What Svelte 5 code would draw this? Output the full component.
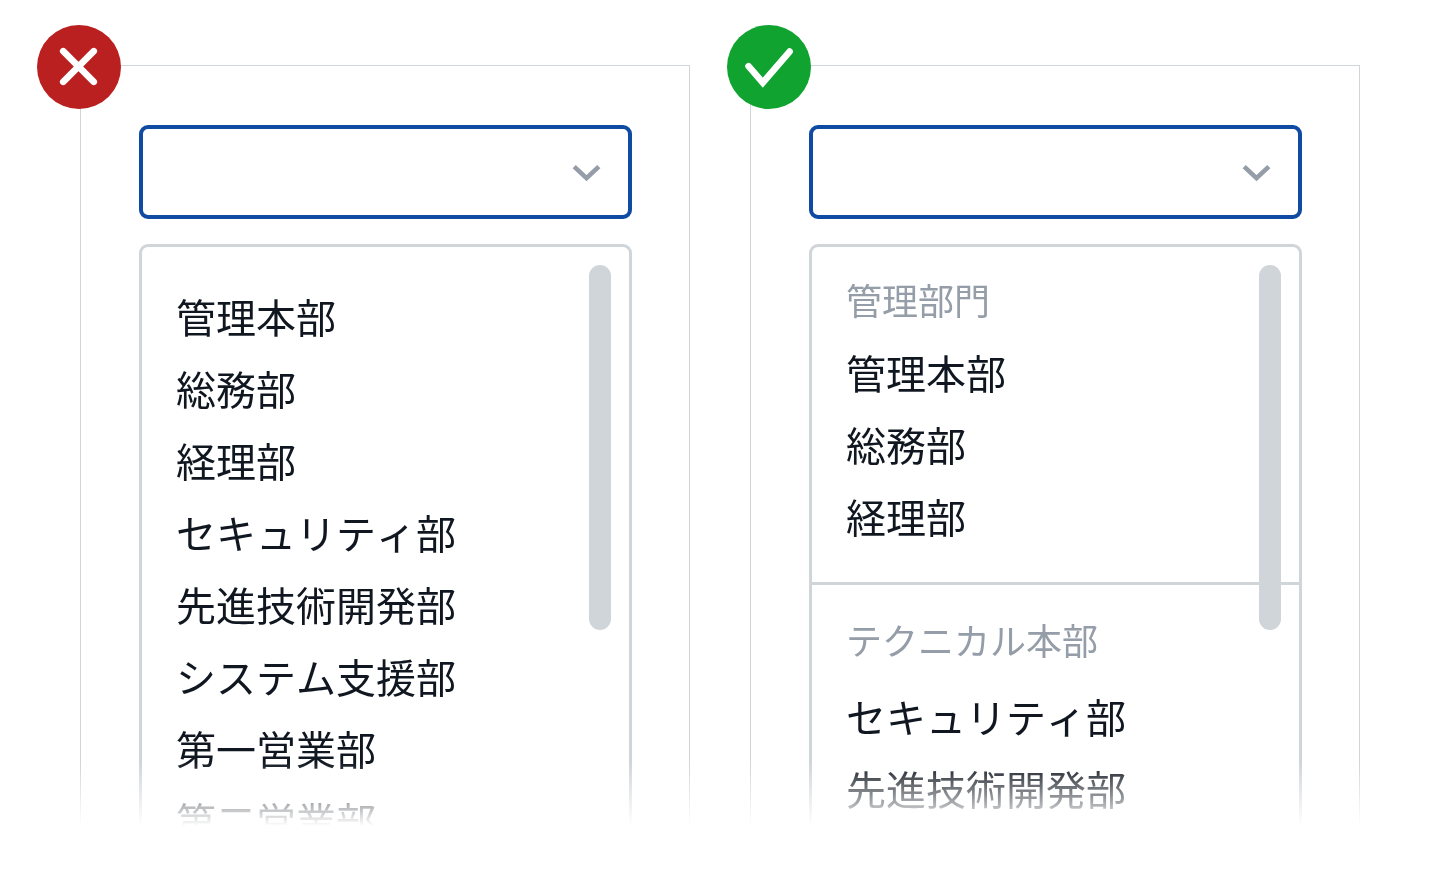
<script>
  const examples = [
    {
      id: 'flat',
      ok: false,
      groups: [
        {
          title: '',
          items: ['管理本部', '総務部', '経理部', 'セキュリティ部', '先進技術開発部', 'システム支援部', '第一営業部', '第二営業部'],
        },
      ],
    },
    {
      id: 'grouped',
      ok: true,
      groups: [
        { title: '管理部門', items: ['管理本部', '総務部', '経理部'] },
        { title: 'テクニカル本部', items: ['セキュリティ部', '先進技術開発部'] },
      ],
    },
  ];
</script>

<main>
  {#each examples as ex (ex.id)}
    <section class="example">
      <div class="frame">
        <div class="field">
          <select id={ex.id} aria-label="部署">
            <option value="" hidden></option>
            {#each ex.groups as g}
              {#each g.items as item}
                <option>{item}</option>
              {/each}
            {/each}
          </select>
          <svg class="chevron" viewBox="0 0 32 32" aria-hidden="true">
            <path d="M4.2 10.6 16.5 22.2 28.8 10.6" />
          </svg>
        </div>
        <div class="menu" role="listbox" aria-label="部署">
          {#each ex.groups as g}
            <div class="group" class:titled={g.title} role="group">
              {#if g.title}
                <div class="title">{g.title}</div>
              {/if}
              {#each g.items as item}
                <div class="option" role="option" aria-selected="false" tabindex="-1">{item}</div>
              {/each}
            </div>
          {/each}
          <span class="thumb"></span>
        </div>
      </div>
      <svg class="badge" class:ok={ex.ok} viewBox="0 0 84 84" aria-hidden="true">
        <circle cx="42" cy="42" r="42" />
        {#if ex.ok}
          <path d="M21.5 41.2 35.8 57.7 62.6 26.6" />
        {:else}
          <path d="M26.2 26.2 56.8 56.8M56.8 26.2 26.2 56.8" />
        {/if}
      </svg>
    </section>
  {/each}
</main>

<style>
  :global(body) {
    margin: 0;
    background: #fff;
  }

  main {
    display: grid;
    grid-template-columns: 1fr 1fr;
    gap: 60px;
    padding: 65px 80px 54px;
    color: #101720;
    font-family: 'Noto Sans CJK JP', 'Noto Sans', sans-serif;
    font-size: 40px;
    font-kerning: none;
    line-height: 72px;
  }

  .example {
    position: relative;
    min-width: 0;
  }

  .frame {
    display: flex;
    flex-direction: column;
    gap: 25px;
    padding: 59px 57px 0 58px;
    border: 1px solid #d0d5da;
    border-bottom: 0;
    mask-image: linear-gradient(#000 calc(100% - 64px), transparent);
  }

  .field {
    position: relative;
    display: grid;
  }

  select {
    width: 100%;
    height: 94px;
    padding: 0 72px 0 34px;
    appearance: none;
    border: 4px solid #0f4aa3;
    border-radius: 9px;
    background: #fff;
    color: inherit;
    font: inherit;
    outline: none;
  }

  .chevron {
    position: absolute;
    top: 31px;
    right: 30px;
    width: 32px;
    height: 32px;
    fill: none;
    stroke: #949da8;
    stroke-width: 4.6;
    pointer-events: none;
  }

  .menu {
    position: relative;
    box-sizing: border-box;
    max-height: 582px;
    overflow: hidden;
    border: 3px solid #d0d5da;
    border-bottom: 0;
    border-radius: 9px 9px 0 0;
  }

  .group {
    padding: 33px 34px 30px;
    white-space: nowrap;
  }

  .titled {
    padding-top: 16px;
  }

  .titled + .titled {
    padding-top: 18px;
    border-top: 3px solid #d0d5da;
  }

  .title {
    margin-bottom: 1px;
    color: #949da8;
    font-size: 36px;
  }

  .titled + .titled .title {
    margin-bottom: 5px;
  }

  .thumb {
    position: absolute;
    top: 18px;
    right: 18px;
    width: 22px;
    height: 365px;
    border-radius: 11px;
    background: #d0d5da;
  }

  .badge {
    position: absolute;
    top: -40px;
    left: -43px;
    width: 84px;
    height: 84px;
    fill: none;
    stroke: #fff;
    stroke-width: 6.6;
    stroke-linecap: round;
  }

  .badge circle {
    fill: #ba2020;
    stroke: none;
  }

  .badge.ok {
    left: -23px;
  }

  .badge.ok circle {
    fill: #10a330;
  }
</style>
